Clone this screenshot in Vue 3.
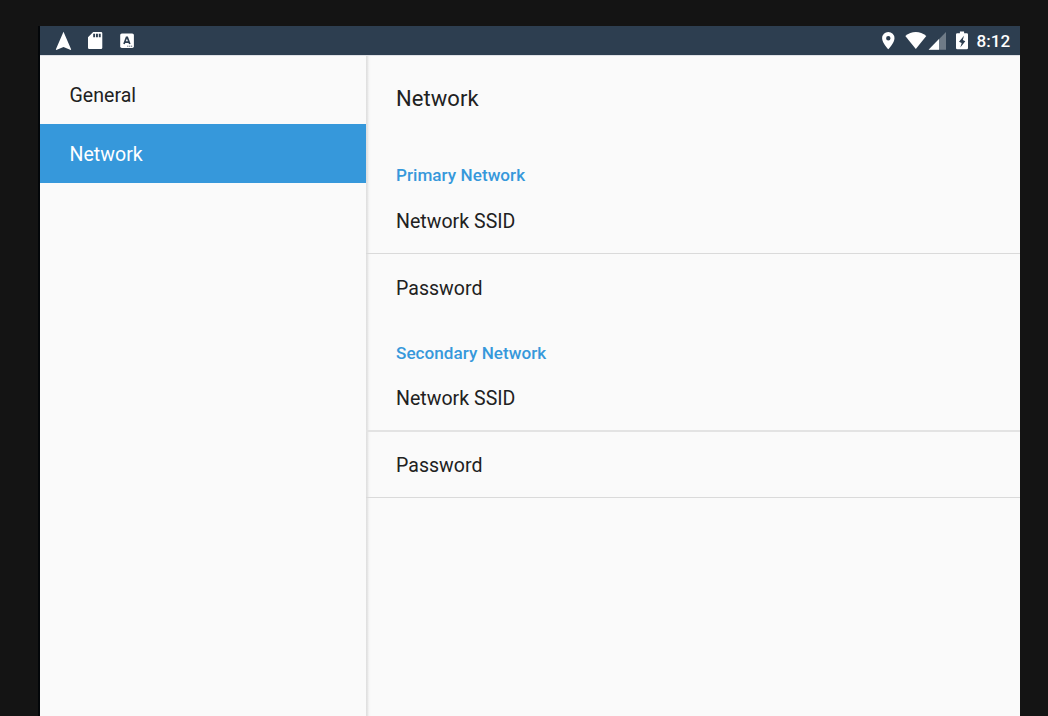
<script setup>
const menu = [
  { label: 'General', active: false },
  { label: 'Network', active: true },
]
const groups = [
  { title: 'Primary Network', cls: 'primary', rows: ['Network SSID', 'Password'] },
  { title: 'Secondary Network', cls: 'secondary', rows: ['Network SSID', 'Password'] },
]
</script>

<template>
  <div class="screen">
    <div class="device">
      <header class="status">
        <svg class="notifications" width="110" height="29" viewBox="40 26 110 29">
          <path fill="#fff" d="M63.5 31.7 71.2 49.6 70.7 50.1 63.5 46.9 56.3 50.1 55.8 49.6Z" />
          <path fill="#fff" fill-rule="evenodd" d="M93.2 32H101a1.3 1.3 0 0 1 1.3 1.3V47.7a1.3 1.3 0 0 1-1.3 1.3H89.3A1.3 1.3 0 0 1 88 47.7V37.2ZM93.2 33.8V37.2H95.1V33.8ZM96 33.8V37.2H97.9V33.8ZM98.8 33.8V37.2H100.7V33.8Z" />
          <rect x="120.2" y="33.4" width="13.7" height="14.6" rx="1.7" fill="#fff" />
          <path fill="none" stroke="#2d3e50" stroke-width="1.7" d="M124 44 126.5 37.3H127.3L129.8 44M125 42.1H128.8" />
          <path stroke="#2d3e50" stroke-width=".8" stroke-dasharray="1.2 .7" d="M127.2 46.2H132.8" />
        </svg>
        <svg class="system" width="96" height="29" viewBox="876 26 96 29">
          <path fill="#fff" fill-rule="evenodd" d="M888.3 32a6.2 6.2 0 0 0-6.2 6.2c0 4.6 6.2 11.1 6.2 11.1s6.2-6.5 6.2-11.1a6.2 6.2 0 0 0-6.2-6.2Zm0 4a2.2 2.2 0 1 1 0 4.4a2.2 2.2 0 0 1 0-4.4Z" />
          <path fill="#fff" d="M905.3 36Q910.1 32.1 915.8 32.1T926.3 36L915.8 49.1Z" />
          <path fill="#6f7b87" d="M946 32V49.7H928.6Z" />
          <path fill="#fff" d="M939 39.1V49.7H928.6Z" />
          <path fill="#fff" d="M959.9 31.5H964.1V33.2H966.7Q968 33.2 968 34.5V47.9Q968 49.2 966.7 49.2H957.3Q956 49.2 956 47.9V34.5Q956 33.2 957.3 33.2H959.9Z" />
          <path fill="#2d3e50" d="M964 35.7 959 41.7 961.7 42.9 960.3 47.4 965.3 41.2 962.8 40.1Z" />
        </svg>
        <time class="clock">8:12</time>
      </header>
      <main class="body">
        <nav class="side">
          <div v-for="m in menu" :key="m.label" class="item" :class="{ active: m.active }">{{ m.label }}</div>
        </nav>
        <section class="content">
          <h1>Network</h1>
          <div v-for="g in groups" :key="g.title" class="group" :class="g.cls">
            <h2>{{ g.title }}</h2>
            <div v-for="r in g.rows" :key="r" class="row">{{ r }}</div>
          </div>
        </section>
      </main>
    </div>
  </div>
</template>

<style>
body { margin: 0; background: #141414; overflow: hidden; }
</style>

<style scoped>
.screen {
  box-sizing: border-box;
  width: 1048px;
  height: 716px;
  padding: 26px 28px 0 38px;
  background: #141414;
  font-family: Roboto, sans-serif;
  color: #212121;
}
.device {
  box-sizing: border-box;
  height: 690px;
  border-left: 2px solid #030609;
  background: #fafafa;
  display: flex;
  flex-direction: column;
}
.status {
  height: 29px;
  flex: none;
  display: flex;
  background: #2d3e50;
  color: #fff;
}
.status svg { display: block; flex: none; }
.system { margin-left: auto; }
.clock {
  width: 48px;
  padding-left: 4.5px;
  box-sizing: border-box;
  font-size: 17.1px;
  font-weight: 500;
  line-height: 31px;
}
.body { flex: 1; display: flex; border-top: 1px solid #dfe1e6; box-sizing: border-box; }
.side { width: 326px; flex: none; padding-top: 9px; }
.item {
  height: 59px;
  box-sizing: border-box;
  padding-left: 29.5px;
  font-size: 19.55px;
  line-height: 62px;
  letter-spacing: .03px;
}
.active { height: 58.6px; background: #3698db; color: #fff; }
.content {
  flex: 1;
  background: linear-gradient(to right, #dedede 0, #e6e6e6 1.5px, #f6f6f6 3px, #fafafa 5px);
}
h1, h2 { margin: 0; padding-left: 30px; }
h1 { height: 103px; font-size: 22px; font-weight: 400; line-height: 86px; letter-spacing: .06px; }
h2 { height: 28px; font-size: 17.1px; font-weight: 500; line-height: 32px; letter-spacing: .04px; color: #3698db; }
.row {
  height: 67px;
  box-sizing: border-box;
  padding-left: 30px;
  border-bottom: 1px solid #dadada;
  font-size: 19.55px;
  line-height: 67px;
  letter-spacing: .02px;
}
.primary { height: 178px; }
.primary .row { line-height: 69px; }
.primary .row:last-child { border-bottom-color: transparent; }
.secondary .row { border-bottom: 2px solid #e3e3e3; }
.secondary .row:last-child { height: 66px; border-bottom: 1px solid #dadada; }
</style>
